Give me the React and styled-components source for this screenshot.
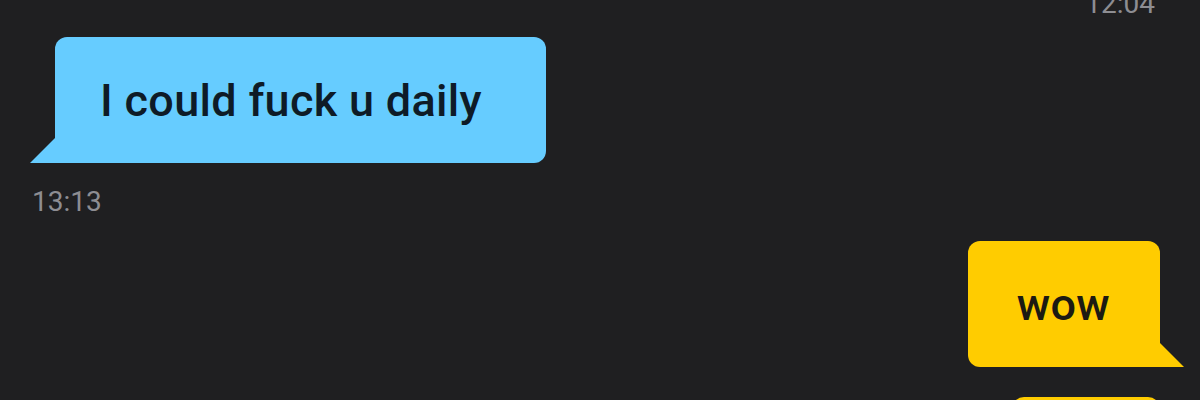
import styled, { createGlobalStyle } from 'styled-components';

const GlobalStyle = createGlobalStyle`
    html, body {
        margin: 0;
        padding: 0;
        background: #1f1f21;
    }
    body {
        font-family: Roboto, "Noto Sans", sans-serif;
    }
`;

const Thread = styled.div`
    height: 400px;
    overflow: hidden;
    display: flex;
    flex-direction: column;
    padding: 0 40px 0 32px;
`;

const Time = styled.div`
    font-size: 28px;
    line-height: 28px;
    color: #8d8d92;
    align-self: ${(p) => (p.$mine ? 'flex-end' : 'flex-start')};
    margin-top: ${(p) => p.$gap}px;
    margin-right: ${(p) => (p.$mine ? 5 : 0)}px;
`;

const Bubble = styled.div`
    position: relative;
    display: flex;
    align-items: center;
    height: 126px;
    margin-top: ${(p) => p.$gap}px;
    align-self: ${(p) => (p.$mine ? 'flex-end' : 'flex-start')};
    margin-left: ${(p) => (p.$mine ? 0 : 23)}px;
    padding: ${(p) => p.$pad};
    background: ${(p) => (p.$mine ? '#ffcc00' : '#66ccff')};
    color: ${(p) => (p.$mine ? '#1c1a12' : '#0e1b27')};
    font-size: 45px;
    font-weight: 500;
    letter-spacing: 0.3px;
    border-radius: ${(p) => (p.$mine ? '12px 12px 0 12px' : '12px 12px 12px 0')};
    flex-shrink: 0;

    &::after {
        content: '';
        position: absolute;
        bottom: 0;
        width: 25px;
        height: 25px;
        background: inherit;
        ${(p) =>
            p.$mine
                ? `right: -24px; clip-path: polygon(0 0, 100% 100%, 0 100%);`
                : `left: -25px; clip-path: polygon(100% 0, 100% 100%, 0 100%);`}
    }
`;

const App = () => {
    return (
        <>
            <GlobalStyle />
            <Thread>
                <Time $mine $gap={-10}>12:04</Time>
                <Bubble $gap={19} $pad="0 64px 0 45px">
                    I could fuck u daily
                </Bubble>
                <Time $gap={25}>13:13</Time>
                <Bubble $mine $gap={25} $pad="0 50px 0 49px">
                    wow
                </Bubble>
                <Bubble $mine $gap={30} $pad="0 74px" />
            </Thread>
        </>
    );
};

export default App;
